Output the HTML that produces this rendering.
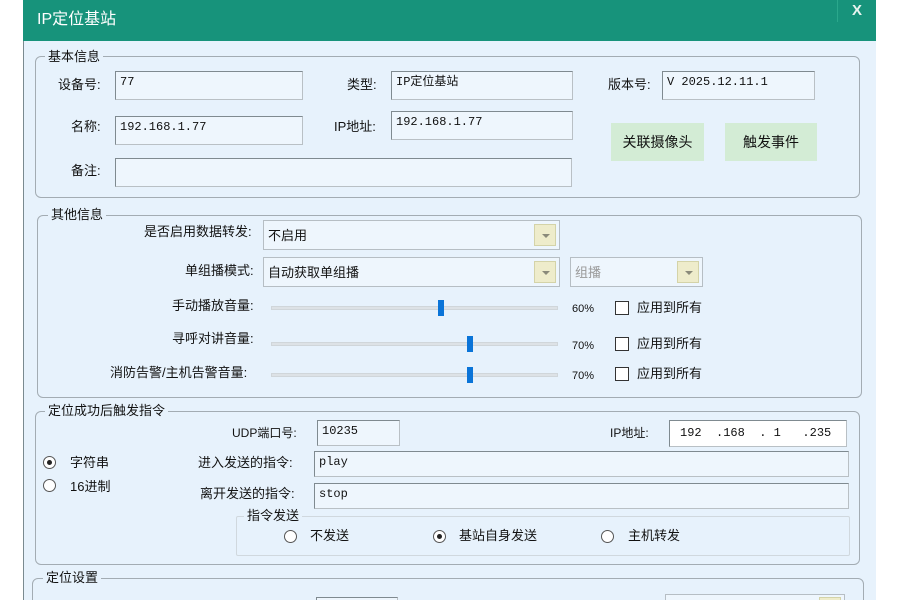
<!DOCTYPE html>
<html style="width:900px;height:600px;overflow:hidden"><head><meta charset="utf-8"><style>
*{margin:0;padding:0;box-sizing:border-box}
body{width:900px;height:600px;background:#fff;position:relative;overflow:hidden;font-family:"Liberation Sans","Noto Sans CJK SC",sans-serif;font-size:13px;color:#111}
.win{position:absolute;left:23px;top:0;width:853px;height:600px;background:#e7f2fc;border-left:1px solid #7a8a90}
.title{position:absolute;left:23px;top:0;width:853px;height:41px;background:#17937b;color:#fff;font-size:16px;padding:5px 0 0 14px}
.sep{position:absolute;left:837px;top:0;width:1px;height:22px;background:#2aa88c}
.x{position:absolute;left:852px;top:2px;color:#e8f4f0;font-size:15px;font-weight:bold}
.a{position:absolute;white-space:nowrap;line-height:16px}
.g{position:absolute;border:1px solid #a3acb3;border-radius:6px}
.gt{position:absolute;background:#e7f2fc;padding:0 3px;line-height:14px}
.in{position:absolute;border:1px solid #7f8a90;border-right-color:#b9c0c5;border-bottom-color:#b9c0c5;background:#eef6fd;font-size:12px;padding:3px 4px;line-height:14px;font-family:"Liberation Mono","Noto Sans CJK SC",monospace}
.btn{position:absolute;background:#d3ecd5;text-align:center;line-height:38px;font-size:14px}
.cb{position:absolute;border:1px solid #b6bec4;background:#eef6fd;font-size:13px;padding:0 4px;line-height:29px}
.dd{position:absolute;top:3px;right:3px;width:22px;height:22px;background:#eeeccb;border:1px solid #d4d3a8}
.dd:after{content:"";position:absolute;left:7px;top:9px;border-left:4px solid transparent;border-right:4px solid transparent;border-top:4px solid #8a8a7a}
.tr{position:absolute;left:271px;width:287px;height:4px;background:#dde2e6;border:1px solid #d0d6da}
.th{position:absolute;width:6px;height:16px;background:#0a74d8}
.ck{position:absolute;width:14px;height:14px;border:1px solid #333;background:#fff}
.rd{position:absolute;width:13px;height:13px;border:1px solid #555;border-radius:50%;background:#fff}
.rd.on:after{content:"";position:absolute;left:3px;top:3px;width:5px;height:5px;border-radius:50%;background:#222}
.pc{font-size:11px}
</style></head><body>
<div class="win"></div>
<div class="title">IP定位基站</div>
<div class="sep"></div>
<div class="x">X</div>

<div class="g" style="left:35px;top:56px;width:825px;height:142px"></div>
<div class="gt" style="left:45px;top:50px">基本信息</div>
<div class="a" style="left:58px;top:77px">设备号:</div>
<div class="in" style="left:115px;top:71px;width:188px;height:29px">77</div>
<div class="a" style="left:347px;top:77px">类型:</div>
<div class="in" style="left:391px;top:71px;width:182px;height:29px">IP定位基站</div>
<div class="a" style="left:608px;top:77px">版本号:</div>
<div class="in" style="left:662px;top:71px;width:153px;height:29px">V 2025.12.11.1</div>
<div class="a" style="left:71px;top:119px">名称:</div>
<div class="in" style="left:115px;top:116px;width:188px;height:29px">192.168.1.77</div>
<div class="a" style="left:334px;top:119px">IP地址:</div>
<div class="in" style="left:391px;top:111px;width:182px;height:29px">192.168.1.77</div>
<div class="btn" style="left:611px;top:123px;width:93px;height:38px">关联摄像头</div>
<div class="btn" style="left:725px;top:123px;width:92px;height:38px">触发事件</div>
<div class="a" style="left:71px;top:163px">备注:</div>
<div class="in" style="left:115px;top:158px;width:457px;height:29px"></div>

<div class="g" style="left:37px;top:215px;width:825px;height:183px"></div>
<div class="gt" style="left:48px;top:208px">其他信息</div>
<div class="a" style="left:144px;top:224px">是否启用数据转发:</div>
<div class="cb" style="left:263px;top:220px;width:297px;height:30px">不启用<div class="dd"></div></div>
<div class="a" style="left:185px;top:263px">单组播模式:</div>
<div class="cb" style="left:263px;top:257px;width:297px;height:30px">自动获取单组播<div class="dd"></div></div>
<div class="cb" style="left:570px;top:257px;width:133px;height:30px;color:#999">组播<div class="dd"></div></div>
<div class="a" style="left:172px;top:298px">手动播放音量:</div>
<div class="tr" style="top:306px"></div><div class="th" style="left:438px;top:300px"></div>
<div class="a pc" style="left:572px;top:301px">60%</div>
<div class="ck" style="left:615px;top:301px"></div><div class="a" style="left:637px;top:300px">应用到所有</div>
<div class="a" style="left:172px;top:331px">寻呼对讲音量:</div>
<div class="tr" style="top:342px"></div><div class="th" style="left:467px;top:336px"></div>
<div class="a pc" style="left:572px;top:338px">70%</div>
<div class="ck" style="left:615px;top:337px"></div><div class="a" style="left:637px;top:336px">应用到所有</div>
<div class="a" style="left:110px;top:365px">消防告警/主机告警音量:</div>
<div class="tr" style="top:373px"></div><div class="th" style="left:467px;top:367px"></div>
<div class="a pc" style="left:572px;top:368px">70%</div>
<div class="ck" style="left:615px;top:367px"></div><div class="a" style="left:637px;top:366px">应用到所有</div>

<div class="g" style="left:35px;top:411px;width:825px;height:154px"></div>
<div class="gt" style="left:45px;top:404px">定位成功后触发指令</div>
<div class="a" style="left:232px;top:425px;font-size:12px">UDP端口号:</div>
<div class="in" style="left:317px;top:420px;width:83px;height:26px">10235</div>
<div class="a" style="left:610px;top:425px;font-size:12px">IP地址:</div>
<div class="in" style="left:669px;top:420px;width:178px;height:27px;background:#fff;padding:5px 10px">192&nbsp;&nbsp;.168&nbsp;&nbsp;.&nbsp;1&nbsp;&nbsp;&nbsp;.235</div>
<div class="rd on" style="left:43px;top:456px"></div><div class="a" style="left:70px;top:455px">字符串</div>
<div class="rd" style="left:43px;top:479px"></div><div class="a" style="left:70px;top:479px">16进制</div>
<div class="a" style="left:198px;top:455px">进入发送的指令:</div>
<div class="in" style="left:314px;top:451px;width:535px;height:26px">play</div>
<div class="a" style="left:200px;top:486px">离开发送的指令:</div>
<div class="in" style="left:314px;top:483px;width:535px;height:26px">stop</div>
<div class="g" style="left:236px;top:516px;width:614px;height:40px;border-radius:2px;border-color:#d0d8de"></div>
<div class="gt" style="left:244px;top:509px">指令发送</div>
<div class="rd" style="left:284px;top:530px"></div><div class="a" style="left:310px;top:528px">不发送</div>
<div class="rd on" style="left:433px;top:530px"></div><div class="a" style="left:459px;top:528px">基站自身发送</div>
<div class="rd" style="left:601px;top:530px"></div><div class="a" style="left:628px;top:528px">主机转发</div>

<div class="g" style="left:32px;top:578px;width:832px;height:40px"></div>
<div class="gt" style="left:43px;top:571px">定位设置</div>
<div class="in" style="left:316px;top:597px;width:82px;height:20px"></div>
<div class="cb" style="left:665px;top:594px;width:180px;height:20px"><div class="dd" style="top:2px"></div></div>
</body></html>
